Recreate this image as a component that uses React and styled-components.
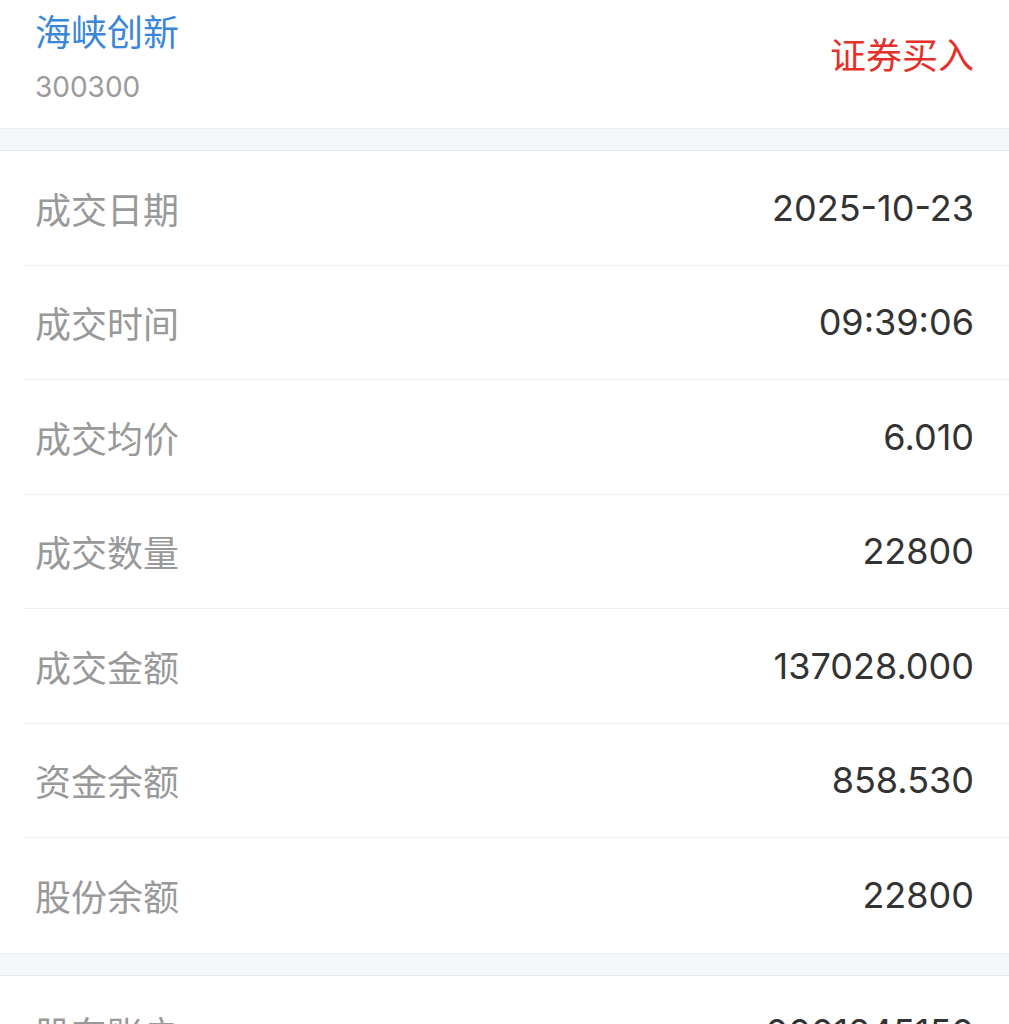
import React from "react";
import styled, { createGlobalStyle } from "styled-components";

const GlobalStyle = createGlobalStyle`
  body {
    margin: 0;
    background: #ffffff;
    font-family: "Inter", "Noto Sans CJK SC", sans-serif;
    -webkit-font-smoothing: antialiased;
  }
`;

const Page = styled.div`
  width: 1009px;
  background: #ffffff;
  overflow: hidden;
`;

const Header = styled.div`
  height: 128px;
  padding: 0 35px 0 35px;
  box-sizing: border-box;
  display: flex;
  justify-content: space-between;
  align-items: flex-start;
`;

const StockInfo = styled.div`
  display: flex;
  flex-direction: column;
  gap: 20px;
  padding-top: 10px;
`;

const StockName = styled.div`
  font-family: "Noto Sans CJK SC", sans-serif;
  font-size: 36px;
  line-height: 40px;
  color: #3a86d7;
`;

const StockCode = styled.div`
  font-size: 28px;
  line-height: 34px;
  color: #9b9b9b;
`;

const TradeType = styled.div`
  margin-top: 33px;
  font-family: "Noto Sans CJK SC", sans-serif;
  font-size: 36px;
  line-height: 40px;
  color: #e5302a;
`;

const Band = styled.div`
  height: 23px;
  box-sizing: border-box;
  background: #f4f7f8;
  border-top: 1px solid #ebeef0;
  border-bottom: 1px solid #e6e9eb;
`;

const Section = styled.div`
  display: flex;
  flex-direction: column;
`;

const Row = styled.div`
  height: 114.5px;
  box-sizing: border-box;
  margin-left: 24px;
  padding: 0 35px 0 11px;
  display: flex;
  align-items: center;
  justify-content: space-between;
  border-bottom: ${p => (p.last ? "none" : "1px solid #eff1f2")};
`;

const Label = styled.span`
  font-family: "Noto Sans CJK SC", sans-serif;
  font-size: 36px;
  color: #999999;
`;

const Value = styled.span`
  font-size: 36px;
  color: #333333;
`;

const trade = [
  ["成交日期", "2025-10-23"],
  ["成交时间", "09:39:06"],
  ["成交均价", "6.010"],
  ["成交数量", "22800"],
  ["成交金额", "137028.000"],
  ["资金余额", "858.530"],
  ["股份余额", "22800"],
];

const account = [["股东账户", "0001245150"]];

export default function App() {
  return (
    <Page>
      <GlobalStyle />
      <Header>
        <StockInfo>
          <StockName>海峡创新</StockName>
          <StockCode>300300</StockCode>
        </StockInfo>
        <TradeType>证券买入</TradeType>
      </Header>
      <Band />
      <Section>
        {trade.map(([label, value], i) => (
          <Row key={label} last={i === trade.length - 1}>
            <Label>{label}</Label>
            <Value>{value}</Value>
          </Row>
        ))}
      </Section>
      <Band />
      <Section>
        {account.map(([label, value]) => (
          <Row key={label}>
            <Label>{label}</Label>
            <Value>{value}</Value>
          </Row>
        ))}
      </Section>
    </Page>
  );
}
